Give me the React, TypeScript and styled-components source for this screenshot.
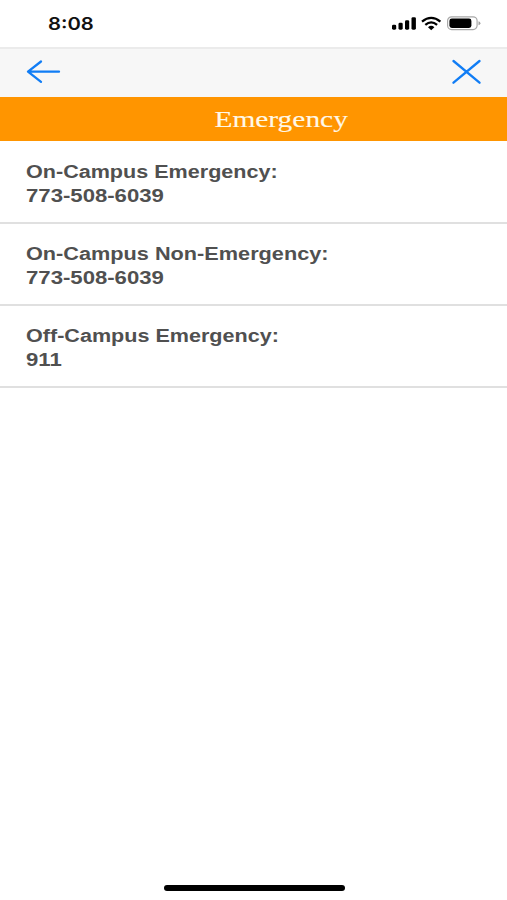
import React from "react";
import styled, { createGlobalStyle } from "styled-components";

const contacts = [
  { label: "On-Campus Emergency:", phone: "773-508-6039", labelScale: 1.198 },
  {
    label: "On-Campus Non-Emergency:",
    phone: "773-508-6039",
    labelScale: 1.205,
  },
  { label: "Off-Campus Emergency:", phone: "911", labelScale: 1.198 },
];

const App = () => (
  <>
    <GlobalStyle />
    <Screen>
      <StatusBar>
        <Wide $scale={1.19}>8:08</Wide>
        <StatusIcons />
      </StatusBar>
      <NavBar>
        <NavButton aria-label="Back">
          <svg width="36" height="26" viewBox="0 0 36 26">
            <path d="M16 2.5L3 12.7L16 22.9M3 12.7H34" />
          </svg>
        </NavButton>
        <NavButton aria-label="Close">
          <svg width="30" height="26" viewBox="0 0 30 26">
            <path d="M1.5 2L27.5 23.7M27.5 2L1.5 23.7" />
          </svg>
        </NavButton>
      </NavBar>
      <Title>
        <Wide $scale={1.28} $origin="center">
          Emergency
        </Wide>
      </Title>
      <List>
        {contacts.map(({ label, phone, labelScale }) => (
          <Contact key={label}>
            <Wide $scale={labelScale}>{label}</Wide>
            <Wide $scale={1.23}>{phone}</Wide>
          </Contact>
        ))}
      </List>
      <Footer>
        <HomeIndicator />
      </Footer>
    </Screen>
  </>
);

const StatusIcons = () => (
  <svg width="90" height="16" viewBox="0 0.8 90 16">
    <rect x="1" y="9.5" width="4.2" height="5" rx="1.4" />
    <rect x="7.5" y="7.5" width="4.2" height="7" rx="1.4" />
    <rect x="14" y="5" width="4.2" height="9.5" rx="1.4" />
    <rect x="20.5" y="2" width="4.4" height="12.5" rx="1.4" />
    <g fill="none" stroke="#000" strokeWidth="2.3">
      <path d="M31 6.4Q40.2 -1 49.4 6.4" />
      <path d="M34.3 9.6Q40.2 4.7 46.1 9.6" />
    </g>
    <path d="M37 12Q40.2 9.3 43.4 12L40.2 15Z" />
    <rect
      x="56.6"
      y="1.6"
      width="29.5"
      height="12.8"
      rx="4"
      fill="none"
      stroke="#a8a8a8"
      strokeWidth="1.2"
    />
    <rect x="58.4" y="3.4" width="22" height="9.4" rx="2.4" />
    <path d="M87.5 6V10Q89.4 9.3 89.4 8T87.5 6Z" fill="#a0a0a0" />
  </svg>
);

export default App;

const GlobalStyle = createGlobalStyle`
  body {
    margin: 0;
    background-color: #fff;
  }
  * {
    box-sizing: border-box;
  }
`;

const Screen = styled.main`
  display: flex;
  flex-direction: column;
  height: 900px;
  overflow: hidden;
  background-color: #fff;
  font-family: "Liberation Sans", Arial, sans-serif;
`;

const Wide = styled.span<{ $scale: number; $origin?: string }>`
  display: block;
  width: max-content;
  transform: scaleX(${({ $scale }) => $scale});
  transform-origin: ${({ $origin }) => $origin ?? "left"};
`;

const StatusBar = styled.header`
  display: flex;
  flex: none;
  align-items: center;
  justify-content: space-between;
  height: 47px;
  padding: 0 26px 0 48px;
  color: #111;
  font: 600 17px/20px Inter, sans-serif;
`;

const NavBar = styled.nav`
  display: flex;
  flex: none;
  align-items: center;
  justify-content: space-between;
  height: 50px;
  padding: 0 25px 2px;
  border-top: 2px solid #ebebeb;
  background-color: #f7f7f7;
`;

const NavButton = styled.button`
  display: flex;
  padding: 0;
  border: 0;
  background: none;
  svg {
    fill: none;
    stroke: #117df5;
    stroke-width: 2.3;
    stroke-linecap: round;
    stroke-linejoin: round;
  }
`;

const Title = styled.h1`
  display: flex;
  flex: none;
  justify-content: center;
  height: 44px;
  margin: 0;
  padding: 9px 0 0 55px;
  background-color: #ff9500;
  color: #fff8e8;
  font: 400 23px/28px "Liberation Serif", serif;
  -webkit-text-stroke: 0.12px #fff8e8;
`;

const List = styled.ul`
  flex: 1;
  margin: 0;
  padding: 1px 0 0;
  list-style: none;
`;

const Contact = styled.li`
  height: 82px;
  padding: 18px 26px 0;
  border-bottom: 2px solid #e0e0e0;
  color: #505050;
  font-size: 18px;
  font-weight: bold;
  line-height: 24px;
`;

const Footer = styled.footer`
  display: flex;
  justify-content: center;
  height: 15px;
  padding-left: 1px;
`;

const HomeIndicator = styled.div`
  width: 181px;
  height: 6px;
  border-radius: 3px;
  background-color: #000;
`;
